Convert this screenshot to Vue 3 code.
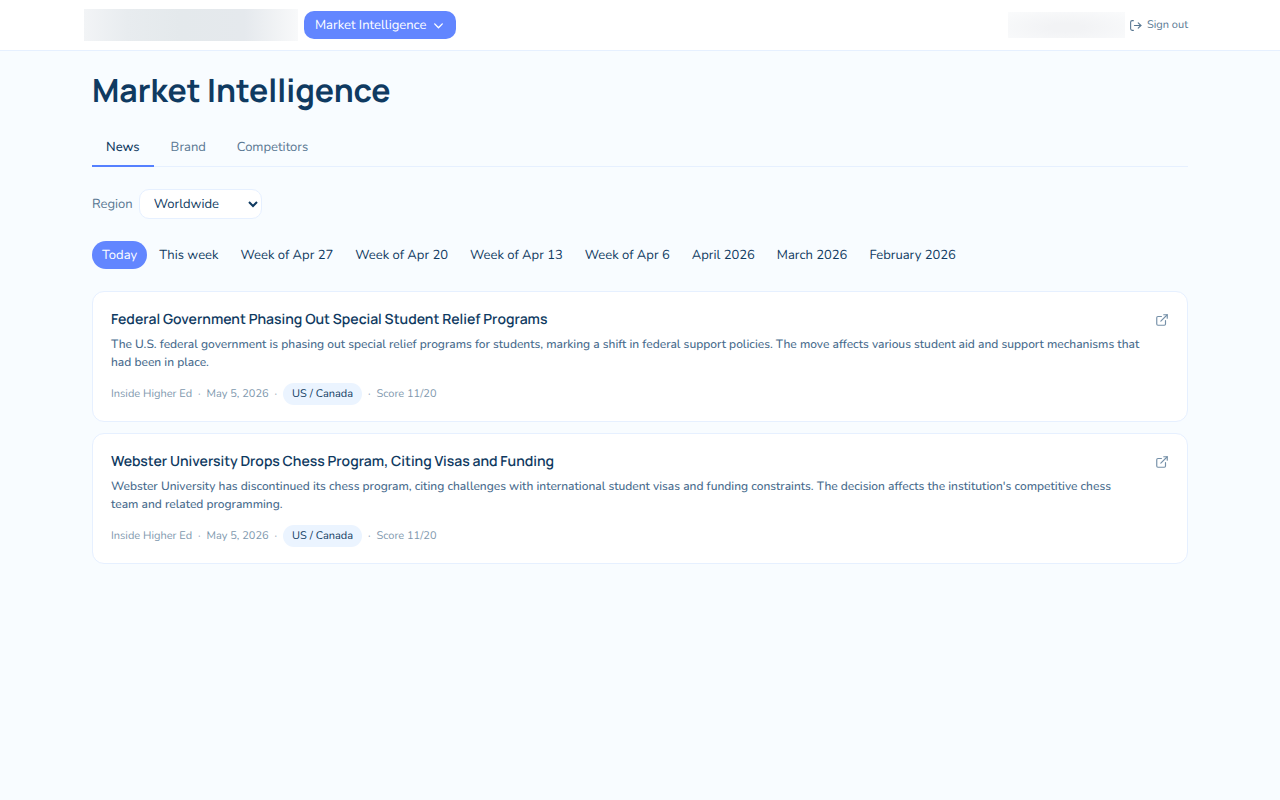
<template>
  <div class="app">
    <header class="topbar">
      <div class="topbar-inner">
        <div class="topbar-left">
          <div class="brand-placeholder"></div>
          <button type="button" class="section-btn">
            <span>Market Intelligence</span>
            <svg class="chevron" viewBox="0 0 24 24" aria-hidden="true">
              <path d="m5 9 7 7 7-7" stroke-width="2.5" />
            </svg>
          </button>
        </div>
        <div class="topbar-right">
          <div class="user-placeholder"></div>
          <button type="button" class="signout-btn">
            <svg class="signout-icon" viewBox="0 0 24 24" aria-hidden="true">
              <path d="M8 3H6a3 3 0 0 0-3 3v12a3 3 0 0 0 3 3h2" />
              <path d="M10 12h12" />
              <path d="m17 7 5 5-5 5" />
            </svg>
            <span>Sign out</span>
          </button>
        </div>
      </div>
    </header>

    <main class="page">
      <h1 class="page-title">Market Intelligence</h1>

      <nav class="tabs">
        <button
          v-for="tab in tabs"
          :key="tab"
          type="button"
          class="tab"
          :class="{ active: tab === activeTab }"
          @click="activeTab = tab"
        >{{ tab }}</button>
      </nav>

      <div class="filter">
        <label class="filter-label" for="region">Region</label>
        <select id="region" v-model="region" class="filter-select">
          <option v-for="r in regions" :key="r">{{ r }}</option>
        </select>
      </div>

      <div class="periods">
        <button
          v-for="p in periods"
          :key="p"
          type="button"
          class="period"
          :class="{ active: p === activePeriod }"
          @click="activePeriod = p"
        >{{ p }}</button>
      </div>

      <section class="news-list">
        <article v-for="item in news" :key="item.title" class="card">
          <div class="card-head">
            <h2 class="card-title">{{ item.title }}</h2>
            <a class="card-link" href="#" :aria-label="'Open ' + item.title">
              <svg viewBox="0 0 24 24" aria-hidden="true">
                <path d="M15 3h6v6" />
                <path d="M10 14 21 3" />
                <path d="M18 13v6a2 2 0 0 1-2 2H5a2 2 0 0 1-2-2V8a2 2 0 0 1 2-2h6" />
              </svg>
            </a>
          </div>
          <p class="card-text">{{ item.summary }}</p>
          <div class="meta">
            <span>{{ item.source }}</span>
            <span>·</span>
            <span>{{ item.date }}</span>
            <span>·</span>
            <span class="badge">{{ item.region }}</span>
            <span>·</span>
            <span>Score {{ item.score }}/20</span>
          </div>
        </article>
      </section>
    </main>
  </div>
</template>

<script setup>
import { ref } from 'vue'

const tabs = ['News', 'Brand', 'Competitors']
const activeTab = ref('News')

const regions = ['Worldwide', 'US / Canada']
const region = ref('Worldwide')

const periods = [
  'Today',
  'This week',
  'Week of Apr 27',
  'Week of Apr 20',
  'Week of Apr 13',
  'Week of Apr 6',
  'April 2026',
  'March 2026',
  'February 2026',
]
const activePeriod = ref('Today')

const news = [
  {
    title: 'Federal Government Phasing Out Special Student Relief Programs',
    summary: 'The U.S. federal government is phasing out special relief programs for students, marking a shift in federal support policies. The move affects various student aid and support mechanisms that had been in place.',
    source: 'Inside Higher Ed',
    date: 'May 5, 2026',
    region: 'US / Canada',
    score: 11,
  },
  {
    title: 'Webster University Drops Chess Program, Citing Visas and Funding',
    summary: "Webster University has discontinued its chess program, citing challenges with international student visas and funding constraints. The decision affects the institution's competitive chess team and related programming.",
    source: 'Inside Higher Ed',
    date: 'May 5, 2026',
    region: 'US / Canada',
    score: 11,
  },
]
</script>

<style>
body {
  background: #f8fcff;
}
</style>

<style scoped>
.app {
  min-height: 100vh;
  background: #f8fcff;
  color: #0f3a61;
  font-family: Nunito, "Noto Sans", sans-serif;
  font-size: 13px;
  line-height: 18px;
  text-rendering: geometricPrecision;
}
button,
select {
  font: inherit;
  color: inherit;
  text-rendering: inherit;
  cursor: pointer;
}
button {
  border: 0;
  background: none;
  padding: 0;
}
svg {
  fill: none;
  stroke: currentColor;
  stroke-width: 2;
  stroke-linecap: round;
  stroke-linejoin: round;
}

/* top bar */
.topbar {
  background: #fff;
  border-bottom: 1px solid #e6f0ff;
}
.topbar-inner {
  display: flex;
  justify-content: space-between;
  align-items: center;
  max-width: 1104px;
  height: 50px;
  margin: 0 auto;
  padding: 0 24px 0 16px;
}
.topbar-left {
  display: flex;
  align-items: center;
  gap: 6px;
}
.topbar-right {
  display: flex;
  align-items: center;
  gap: 4px;
}
.brand-placeholder {
  width: 214px;
  height: 32px;
  background: linear-gradient(90deg, #f2f4f6, #e8ecef 20%, #e4e9ec 45%, #e5e9ed 75%, #f8f9fa);
}
.section-btn {
  display: flex;
  align-items: center;
  justify-content: space-between;
  width: 152px;
  height: 28px;
  padding: 0 11px;
  border-radius: 10px;
  background: #6286ff;
  color: #fff;
  white-space: nowrap;
}
.chevron {
  width: 13px;
  height: 13px;
}
.user-placeholder {
  width: 117px;
  height: 26px;
  background: radial-gradient(ellipse at 50% 60%, #f2f3f5 20%, #fafbfc 100%);
}
.signout-btn {
  display: flex;
  align-items: center;
  gap: 5px;
  font-size: 11px;
  color: #587792;
}
.signout-icon {
  width: 13px;
  height: 13px;
}

/* page */
.page {
  max-width: 1096px;
  margin: 0 auto;
  padding: 17px 32px 32px;
}
.page-title {
  margin: 0 0 18px;
  font-family: Manrope, Inter, sans-serif;
  font-size: 32px;
  line-height: 44px;
  font-weight: 700;
}
.tabs {
  display: flex;
  gap: 3px;
  margin-bottom: 22px;
  border-bottom: 1px solid #e6f0ff;
}
.tab {
  margin-bottom: -1px;
  padding: 8px 14px 9px;
  border-bottom: 2px solid transparent;
  color: #587792;
}
.tab.active {
  border-bottom-color: #5580ff;
  color: #0f3a61;
  font-weight: 500;
}
.filter {
  display: flex;
  align-items: center;
  gap: 6px;
  margin-bottom: 22px;
}
.filter-label {
  color: #587792;
}
.filter-select {
  width: 123px;
  height: 30px;
  padding: 0 0 0 10px;
  border: 1px solid #e6f0ff;
  border-radius: 10px;
  background: #fff;
}
.periods {
  display: flex;
  flex-wrap: wrap;
  gap: 2px;
  margin-bottom: 22px;
}
.period {
  height: 28px;
  padding: 0 10px;
  border-radius: 14px;
}
.period.active {
  background: #6286ff;
  color: #fff;
}

/* news cards */
.news-list {
  display: flex;
  flex-direction: column;
  gap: 11px;
}
.card {
  padding: 16px 18px;
  border: 1px solid #e6f0ff;
  border-radius: 12px;
  background: #fff;
}
.card-head {
  display: flex;
  align-items: center;
  justify-content: space-between;
  margin-bottom: 4px;
}
.card-title {
  margin: 0;
  font-family: Manrope, Inter, sans-serif;
  font-size: 14px;
  line-height: 24px;
  font-weight: 600;
}
.card-link {
  display: flex;
  color: #7590a8;
}
.card-link svg {
  width: 14px;
  height: 14px;
}
.card-text {
  margin: 0;
  padding-right: 28px;
  font-size: 12px;
  font-weight: 500;
  color: #466a8c;
}
.meta {
  display: flex;
  align-items: center;
  gap: 6px;
  margin-top: 11px;
  font-size: 11px;
  color: #8098ae;
}
.badge {
  padding: 2px 9px;
  border-radius: 11px;
  background: #ebf4ff;
  color: #0f3a61;
}
</style>
